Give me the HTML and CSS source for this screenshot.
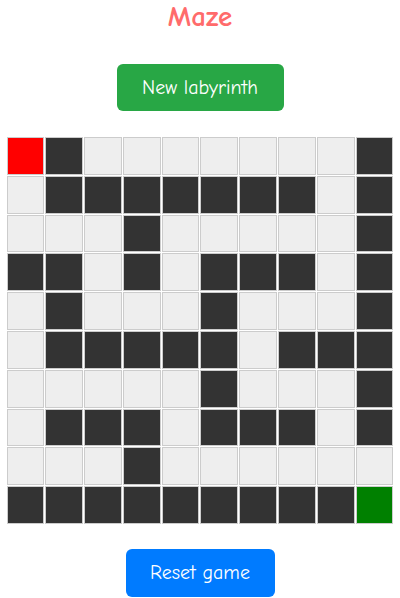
FILE: index.html
```html
<!DOCTYPE html>
<html>
<head>
<meta charset="utf-8">
<link rel="stylesheet" href="styles.css">
</head>
<body>
<div class="app">
  <h1 class="title">Maze</h1>
  <button class="btn btn-new">New labyrinth</button>
  <div class="maze">
    <div class="cell start"></div><div class="cell wall"></div><div class="cell"></div><div class="cell"></div><div class="cell"></div><div class="cell"></div><div class="cell"></div><div class="cell"></div><div class="cell"></div><div class="cell wall"></div>
    <div class="cell"></div><div class="cell wall"></div><div class="cell wall"></div><div class="cell wall"></div><div class="cell wall"></div><div class="cell wall"></div><div class="cell wall"></div><div class="cell wall"></div><div class="cell"></div><div class="cell wall"></div>
    <div class="cell"></div><div class="cell"></div><div class="cell"></div><div class="cell wall"></div><div class="cell"></div><div class="cell"></div><div class="cell"></div><div class="cell"></div><div class="cell"></div><div class="cell wall"></div>
    <div class="cell wall"></div><div class="cell wall"></div><div class="cell"></div><div class="cell wall"></div><div class="cell"></div><div class="cell wall"></div><div class="cell wall"></div><div class="cell wall"></div><div class="cell"></div><div class="cell wall"></div>
    <div class="cell"></div><div class="cell wall"></div><div class="cell"></div><div class="cell"></div><div class="cell"></div><div class="cell wall"></div><div class="cell"></div><div class="cell"></div><div class="cell"></div><div class="cell wall"></div>
    <div class="cell"></div><div class="cell wall"></div><div class="cell wall"></div><div class="cell wall"></div><div class="cell wall"></div><div class="cell wall"></div><div class="cell"></div><div class="cell wall"></div><div class="cell wall"></div><div class="cell wall"></div>
    <div class="cell"></div><div class="cell"></div><div class="cell"></div><div class="cell"></div><div class="cell"></div><div class="cell wall"></div><div class="cell"></div><div class="cell"></div><div class="cell"></div><div class="cell wall"></div>
    <div class="cell"></div><div class="cell wall"></div><div class="cell wall"></div><div class="cell wall"></div><div class="cell"></div><div class="cell wall"></div><div class="cell wall"></div><div class="cell wall"></div><div class="cell"></div><div class="cell wall"></div>
    <div class="cell"></div><div class="cell"></div><div class="cell"></div><div class="cell wall"></div><div class="cell"></div><div class="cell"></div><div class="cell"></div><div class="cell"></div><div class="cell"></div><div class="cell"></div>
    <div class="cell wall"></div><div class="cell wall"></div><div class="cell wall"></div><div class="cell wall"></div><div class="cell wall"></div><div class="cell wall"></div><div class="cell wall"></div><div class="cell wall"></div><div class="cell wall"></div><div class="cell goal"></div>
  </div>
  <button class="btn btn-reset">Reset game</button>
</div>
</body>
</html>
```

FILE: styles.css
```css
html, body {
  margin: 0;
  padding: 0;
  background: #ffffff;
}

.app {
  display: flex;
  flex-direction: column;
  align-items: center;
  font-family: "Comic Sans MS", "Comic Neue", "Open Sans", sans-serif;
}

.title {
  margin: 0;
  font-size: 29px;
  line-height: 34px;
  font-weight: 700;
  color: #ff6b6b;
}

.btn {
  border: none;
  border-radius: 6px;
  color: #ffffff;
  font-family: inherit;
  font-size: 20px;
  padding: 0;
  cursor: pointer;
}

.btn-new {
  margin-top: 30px;
  width: 167px;
  height: 47px;
  background: #28a745;
}

.maze {
  margin-top: 26px;
  width: 387px;
  display: grid;
  grid-template-columns: repeat(10, 1fr);
  grid-auto-rows: 37.8px;
  gap: 1px;
}

.cell {
  box-sizing: border-box;
  border: 1px solid #cccccc;
  background: #eeeeee;
}

.cell.wall {
  background: #333333;
}

.cell.start {
  background: #ff0000;
}

.cell.goal {
  background: #008000;
}

.btn-reset {
  margin-top: 25px;
  width: 149px;
  height: 48px;
  background: #007bff;
}
```
